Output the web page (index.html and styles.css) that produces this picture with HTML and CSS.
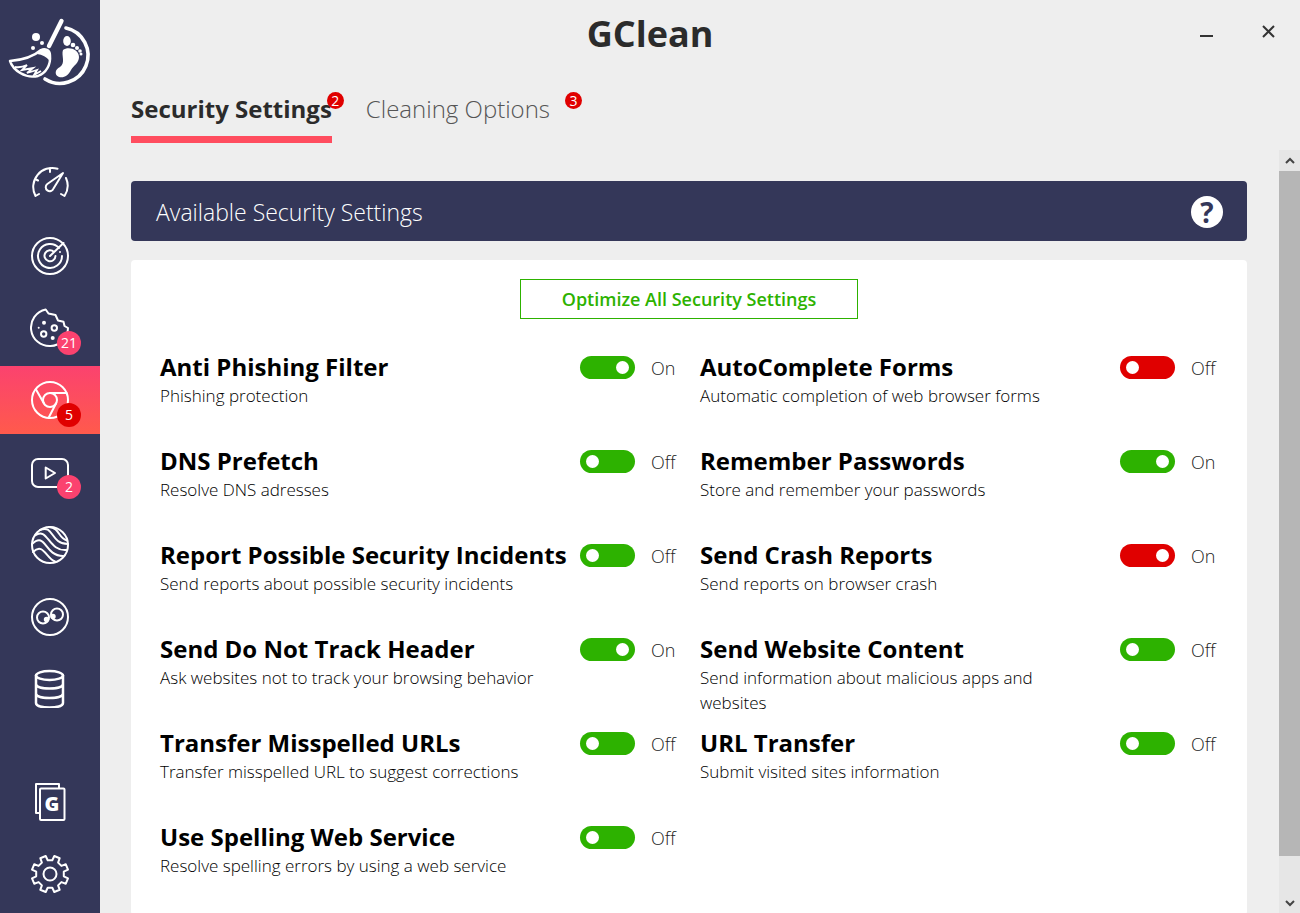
FILE: index.html
```html
<!DOCTYPE html>
<html lang="en">
<head>
    <meta charset="UTF-8">
    <meta name="viewport" content="width=device-width, initial-scale=1.0">
    <title>GClean</title>
    <link rel="stylesheet" href="styles.css">
</head>
<body>
    <aside class="sidebar">
        <svg class="logo" viewBox="0 0 100 100" aria-label="GClean">
            <path d="M66 28A28 28 0 1 1 45 79" fill="none" stroke="#fff" stroke-width="3.6" stroke-linecap="round"/>
            <path d="M61.500 21L49 46" stroke="#fff" stroke-width="4.400" stroke-linecap="round"/>
            <path d="M10 61C23 60 33 57 41 50C45 48 50 50 50 55C51 65 46 73 38 76C25 79 13 70 10 61Z" fill="none" stroke="#fff" stroke-width="2.4" stroke-linejoin="round"/>
            <path d="M37 54C42 48 48 48 50 52L50 61Q45 55 37 54Z" fill="#fff"/>
            <path d="M15 67Q21 68 27 65L22 70L33 68L27 73L37 70L34 75L41 71" fill="none" stroke="#fff" stroke-width="1.800"/>
            <circle cx="36" cy="37" r="4" fill="#fff"/>
            <circle cx="42" cy="43" r="2" fill="#fff"/>
            <circle cx="33" cy="48" r="2" fill="#fff"/>
            <ellipse cx="67" cy="41" rx="3.800" ry="5" fill="#fff"/>
            <circle cx="73" cy="45" r="2.300" fill="#fff"/>
            <circle cx="77" cy="48" r="2" fill="#fff"/>
            <circle cx="80" cy="51" r="1.800" fill="#fff"/>
            <circle cx="81" cy="54" r="1.500" fill="#fff"/>
            <path d="M63 50C68 46 79 49 79 57C79 63 74 65 71 70C68 76 64 78 59 77C54 75 55 69 60 67C66 63 61 55 63 50Z" fill="#fff"/>
        </svg>

        <nav class="nav">
            <a href="#" class="nav-item" aria-label="Dashboard">
                <svg viewBox="0 0 40 40"><path d="M9 30L5.500 32A19 19 0 0 1 27.500 4.700M36 14A19 19 0 0 1 34.500 32L31 30M20 4V8M5 15L8 16.500M17.300 20L33 9L23.500 24.500A4 4 0 1 1 17.300 20Z"/></svg>
            </a>
            <a href="#" class="nav-item" aria-label="Tracking">
                <svg viewBox="0 0 40 40"><circle cx="20" cy="20" r="18"/><path d="M29 12A12 12 0 1 0 32 20M24 16A5.500 5.500 0 1 0 25.500 20M20 20L33.500 7"/><circle class="fill" cx="30" cy="16" r="1"/></svg>
            </a>
            <a href="#" class="nav-item" aria-label="Cookies">
                <svg viewBox="0 0 40 40"><path d="M15.700 1.500A18.500 18.500 0 1 0 38 20L34.500 18L33.500 13.700L28 12.500L25.500 7L18.500 5.500Z"/><circle cx="24.300" cy="20" r="2.700"/><circle cx="13.700" cy="26" r="2.700"/><circle class="fill" cx="14" cy="14.700" r="2"/><circle class="fill" cx="22.700" cy="30" r="2"/><circle class="fill" cx="8.700" cy="19.700" r="1"/></svg>
                <span class="badge">21</span>
            </a>
            <a href="#" class="nav-item active" aria-label="Chrome">
                <svg viewBox="0 0 40 40"><circle cx="20" cy="20" r="18"/><circle cx="20" cy="20" r="7"/><path d="M20 13H36.500M6 9.500L14 23.500M26 23.500L18.500 38"/></svg>
                <span class="badge alert">5</span>
            </a>
            <a href="#" class="nav-item" aria-label="YouTube">
                <svg viewBox="0 0 40 40"><rect x="2" y="7" width="36" height="28" rx="6"/><path d="M15.700 15.500L25 21L15.700 26.500Z"/></svg>
                <span class="badge">2</span>
            </a>
            <a href="#" class="nav-item" aria-label="Streams">
                <svg viewBox="0 0 40 40"><circle cx="20" cy="21" r="18"/><path d="M3 28C13 18 16 34 25 37.500M2 20C16 7 14 32 33 32M5 11.500C18 2 18 28 37 26M10 6C24 0 20 20 38 20M19 3C30 4 28 14 37 16.500"/></svg>
            </a>
            <a href="#" class="nav-item" aria-label="Privacy">
                <svg viewBox="0 0 40 40"><circle cx="20" cy="21" r="18"/><circle cx="13" cy="21.500" r="6"/><circle cx="27" cy="18.500" r="6"/><circle class="fill" cx="16.500" cy="23.500" r="2.700"/><circle class="fill" cx="23" cy="20.500" r="2.700"/></svg>
            </a>
            <a href="#" class="nav-item" aria-label="Databases">
                <svg class="thick" viewBox="0 0 40 40"><ellipse cx="19.500" cy="7.500" rx="13.500" ry="4.500"/><path d="M6 7.500V35C6 41 33 41 33 35V7.500M6 16C6 22 33 22 33 16M6 25.500C6 31.500 33 31.500 33 25.500"/></svg>
            </a>
        </nav>

        <nav class="nav nav-bottom">
            <a href="#" class="nav-item" aria-label="Products">
                <svg viewBox="0 0 40 40"><path d="M9.500 31H6V2H29V6"/><rect x="10" y="6.500" width="24.500" height="31.500" rx="1"/><text x="22" y="29" text-anchor="middle">G</text></svg>
            </a>
            <a href="#" class="nav-item" aria-label="Settings">
                <svg viewBox="0 0 40 40"><circle cx="20" cy="20" r="6.500"/><path d="M22.300 6.200L24.300 2L29.700 4.200L28.100 8.600L31.400 11.900L35.800 10.300L38 15.700L33.800 17.700V22.300L38 24.300L35.800 29.700L31.400 28.100L28.100 31.400L29.700 35.800L24.300 38L22.300 33.800H17.700L15.700 38L10.300 35.800L11.900 31.400L8.600 28.100L4.200 29.700L2 24.300L6.200 22.300V17.700L2 15.700L4.200 10.300L8.600 11.900L11.900 8.600L10.300 4.200L15.700 2L17.700 6.200Z"/></svg>
            </a>
        </nav>
    </aside>

    <div class="window">
        <header class="titlebar">
            <h1>GClean</h1>
            <button type="button" class="win-btn" aria-label="Minimize">
                <svg viewBox="0 0 16 16"><path d="M1 12H14"/></svg>
            </button>
            <button type="button" class="win-btn" aria-label="Close">
                <svg viewBox="0 0 16 16"><path d="M2 2L13 13M13 2L2 13"/></svg>
            </button>
        </header>

        <div class="tabs">
            <button type="button" class="tab selected">Security Settings<span class="count">2</span></button>
            <button type="button" class="tab">Cleaning Options<span class="count">3</span></button>
        </div>

        <div class="scroller">
            <main class="content">
                <div class="banner">
                    <h2>Available Security Settings</h2>
                    <button type="button" class="help" aria-label="Help">?</button>
                </div>

                <section class="panel">
                    <button type="button" class="optimize">Optimize All Security Settings</button>

                    <div class="settings">
                        <div class="setting">
                            <div class="info">
                                <label for="phishing">Anti Phishing Filter</label>
                                <p>Phishing protection</p>
                            </div>
                            <input type="checkbox" id="phishing" checked>
                            <span class="state">On</span>
                        </div>
                        <div class="setting">
                            <div class="info">
                                <label for="forms">AutoComplete Forms</label>
                                <p>Automatic completion of web browser forms</p>
                            </div>
                            <input type="checkbox" id="forms" class="unsafe">
                            <span class="state">Off</span>
                        </div>
                        <div class="setting">
                            <div class="info">
                                <label for="dns">DNS Prefetch</label>
                                <p>Resolve DNS adresses</p>
                            </div>
                            <input type="checkbox" id="dns">
                            <span class="state">Off</span>
                        </div>
                        <div class="setting">
                            <div class="info">
                                <label for="passwords">Remember Passwords</label>
                                <p>Store and remember your passwords</p>
                            </div>
                            <input type="checkbox" id="passwords" checked>
                            <span class="state">On</span>
                        </div>
                        <div class="setting">
                            <div class="info">
                                <label for="incidents">Report Possible Security Incidents</label>
                                <p>Send reports about possible security incidents</p>
                            </div>
                            <input type="checkbox" id="incidents">
                            <span class="state">Off</span>
                        </div>
                        <div class="setting">
                            <div class="info">
                                <label for="crash">Send Crash Reports</label>
                                <p>Send reports on browser crash</p>
                            </div>
                            <input type="checkbox" id="crash" class="unsafe" checked>
                            <span class="state">On</span>
                        </div>
                        <div class="setting">
                            <div class="info">
                                <label for="dnt">Send Do Not Track Header</label>
                                <p>Ask websites not to track your browsing behavior</p>
                            </div>
                            <input type="checkbox" id="dnt" checked>
                            <span class="state">On</span>
                        </div>
                        <div class="setting">
                            <div class="info">
                                <label for="website">Send Website Content</label>
                                <p>Send information about malicious apps and websites</p>
                            </div>
                            <input type="checkbox" id="website">
                            <span class="state">Off</span>
                        </div>
                        <div class="setting">
                            <div class="info">
                                <label for="misspelled">Transfer Misspelled URLs</label>
                                <p>Transfer misspelled URL to suggest corrections</p>
                            </div>
                            <input type="checkbox" id="misspelled">
                            <span class="state">Off</span>
                        </div>
                        <div class="setting">
                            <div class="info">
                                <label for="url">URL Transfer</label>
                                <p>Submit visited sites information</p>
                            </div>
                            <input type="checkbox" id="url">
                            <span class="state">Off</span>
                        </div>
                        <div class="setting">
                            <div class="info">
                                <label for="spelling">Use Spelling Web Service</label>
                                <p>Resolve spelling errors by using a web service</p>
                            </div>
                            <input type="checkbox" id="spelling">
                            <span class="state">Off</span>
                        </div>
                    </div>
                </section>
            </main>

            <div class="scrollbar">
                <button type="button" aria-label="Scroll up"><svg viewBox="0 0 12 12"><path d="M2 8L6 4L10 8"/></svg></button>
                <div class="track"><div class="thumb"></div></div>
                <button type="button" aria-label="Scroll down"><svg viewBox="0 0 12 12"><path d="M2 4L6 8L10 4"/></svg></button>
            </div>
        </div>
    </div>

    <script>
        document.querySelectorAll('.setting input').forEach(input => {
            input.addEventListener('change', () => {
                input.nextElementSibling.textContent = input.checked ? 'On' : 'Off';
            });
        });
    </script>
</body>
</html>
```
FILE: styles.css
```css
* {
    margin: 0;
    padding: 0;
    box-sizing: border-box;
}

body {
    display: flex;
    height: 100vh;
    overflow: hidden;
    background-color: #eeeeee;
    color: #2b2b2b;
    font-family: "Open Sans", "Noto Sans", sans-serif;
}

button {
    border: none;
    background: none;
    color: inherit;
    font-family: inherit;
    cursor: pointer;
}

/* Sidebar */
.sidebar {
    display: flex;
    flex-direction: column;
    flex: none;
    width: 100px;
    padding-bottom: 5px;
    background-color: #343759;
}

.logo {
    display: block;
    width: 100px;
    height: 100px;
    margin-bottom: 50px;
}

.nav {
    display: flex;
    flex-direction: column;
    gap: 4px;
}

.nav-bottom {
    margin-top: auto;
}

.nav-item {
    position: relative;
    display: flex;
    align-items: center;
    justify-content: center;
    height: 68px;
}

.nav-item.active {
    background: linear-gradient(#fb426f, #ff5a4c);
}

.nav-item svg {
    width: 40px;
    height: 40px;
    fill: none;
    stroke: white;
    stroke-width: 2;
    stroke-linejoin: round;
    stroke-linecap: round;
}

.nav-item .thick {
    stroke-width: 2.5;
}

.nav-item .fill {
    fill: white;
    stroke: none;
}

.nav-item text {
    fill: white;
    stroke: none;
    font-size: 20px;
    font-weight: 800;
}

.badge {
    position: absolute;
    left: 57px;
    top: 37px;
    width: 24px;
    height: 24px;
    border-radius: 50%;
    background-color: #fb426f;
    color: white;
    font-size: 14px;
    line-height: 24px;
    text-align: center;
}

.badge.alert {
    background-color: #e00000;
}

/* Title bar */
.window {
    display: flex;
    flex-direction: column;
    flex: 1;
    min-width: 0;
}

.titlebar {
    display: flex;
    align-items: center;
    height: 68px;
    padding-left: 24px;
}

.titlebar h1 {
    flex: 1;
    text-align: center;
    font-size: 36px;
    line-height: 48px;
}

.win-btn {
    width: 62px;
    height: 60px;
}

.win-btn svg {
    width: 16px;
    height: 16px;
    fill: none;
    stroke: #333;
    stroke-width: 2;
}

/* Tabs */
.tabs {
    display: flex;
    gap: 34px;
    height: 82px;
    padding: 24px 31px 0;
}

.tab {
    position: relative;
    height: 51px;
    padding-right: 20px;
    padding-bottom: 10px;
    border-bottom: 7px solid transparent;
    color: #555;
    font-size: 24px;
    font-weight: 300;
    line-height: 34px;
}

.tab.selected {
    padding-right: 0;
    border-bottom-color: #ff4d5f;
    color: #2b2b2b;
    font-weight: bold;
}

.count {
    position: absolute;
    top: 0;
    right: -12px;
    width: 17px;
    height: 17px;
    border-radius: 50%;
    background-color: #e00000;
    color: white;
    font-size: 14px;
    font-weight: 400;
    line-height: 17px;
    text-align: center;
}

/* Scrolling area */
.scroller {
    display: flex;
    flex: 1;
    min-height: 0;
    overflow: hidden;
}

.content {
    display: flex;
    flex-direction: column;
    flex: 1;
    min-width: 0;
    gap: 19px;
    padding: 31px 32px 0 31px;
}

.banner {
    display: flex;
    align-items: center;
    justify-content: space-between;
    flex: none;
    height: 60px;
    padding: 2px 24px 0 25px;
    border-radius: 4px;
    background-color: #343759;
    color: white;
}

.banner h2 {
    font-size: 23px;
    font-weight: 300;
    line-height: 32px;
}

.help {
    width: 32px;
    height: 32px;
    border-radius: 50%;
    background-color: white;
    color: #343759;
    font-size: 28px;
    font-weight: bold;
    line-height: 32px;
}

.panel {
    flex: 1 0 auto;
    padding-top: 19px;
    border-radius: 4px;
    background-color: white;
}

.optimize {
    display: block;
    width: 338px;
    height: 40px;
    margin: 0 auto 32px;
    border: 1px solid #2db200;
    color: #2db200;
    font-size: 18px;
    font-weight: 600;
}

.settings {
    display: grid;
    grid-template-columns: repeat(2, minmax(0, 1fr));
    grid-auto-rows: minmax(94px, auto);
    padding: 0 7px 0 29px;
}

.setting {
    display: flex;
    align-items: flex-start;
}

.info {
    flex: 1;
    min-width: 0;
    padding-right: 20px;
    color: black;
}

.info label {
    display: block;
    font-size: 24px;
    font-weight: bold;
    line-height: 32px;
    white-space: nowrap;
}

.info p {
    font-size: 17px;
    font-weight: 300;
    line-height: 25px;
}

.setting input {
    appearance: none;
    position: relative;
    flex: none;
    width: 55px;
    height: 23px;
    margin-top: 5px;
    border-radius: 12px;
    background-color: #2db200;
    cursor: pointer;
}

.setting input::before {
    content: "";
    position: absolute;
    top: 5px;
    left: 6px;
    width: 13px;
    height: 13px;
    border-radius: 50%;
    background-color: white;
}

.setting input:checked::before {
    left: 36px;
}

.setting input.unsafe {
    background-color: #e00000;
}

.state {
    flex: none;
    width: 65px;
    padding-left: 16px;
    color: #222;
    font-size: 18px;
    font-weight: 300;
    line-height: 34px;
}

/* Scrollbar */
.scrollbar {
    display: flex;
    flex-direction: column;
    flex: none;
    width: 21px;
    background-color: #e6e6e6;
}

.scrollbar button {
    display: flex;
    align-items: center;
    justify-content: center;
    height: 21px;
}

.scrollbar svg {
    width: 12px;
    height: 12px;
    fill: none;
    stroke: #444;
    stroke-width: 2;
}

.track {
    flex: 1;
}

.thumb {
    height: 95%;
    background-color: #b6b6b6;
}
```
